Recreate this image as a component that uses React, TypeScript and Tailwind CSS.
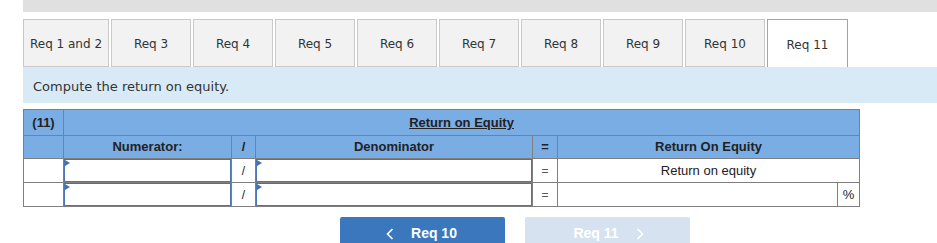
import React from "react";

const tabs = ["Req 1 and 2", "Req 3", "Req 4", "Req 5", "Req 6", "Req 7", "Req 8", "Req 9", "Req 10", "Req 11"];

function EntryBox() {
  return (
    <div className="relative h-[23px] border border-[#4a78b5] border-t-[#5b6f8c] bg-white">
      <span className="absolute left-0 top-0 h-0 w-0 border-y-[3px] border-l-[5px] border-y-transparent border-l-[#3c74b8]" />
    </div>
  );
}

function Chevron({ dir }: { dir: "left" | "right" }) {
  return (
    <svg width="8" height="12" viewBox="0 0 8 12" fill="none" stroke="white" strokeWidth="1.6">
      {dir === "left" ? <polyline points="6.5,1 1.5,6 6.5,11" /> : <polyline points="1.5,1 6.5,6 1.5,11" />}
    </svg>
  );
}

export default function App() {
  return (
    <div className="h-[243px] w-[937px] overflow-hidden bg-white pl-[23px] font-['DejaVu_Sans',Verdana,sans-serif] text-[#222]">
      {/* top strip */}
      <div className="h-[12px] bg-[#e0e0e0]" />

      {/* tabs */}
      <div className="mt-[7px] flex h-[48px] gap-[2px]">
        {tabs.map((t, i) => {
          const active = t === "Req 11";
          return (
            <div
              key={t}
              className={
                active
                  ? "flex h-[48px] w-[81px] items-center justify-center border border-b-0 border-[#a3a3a3] bg-white pt-[2px] text-[12px] text-[#333]"
                  : i === 0
                  ? "flex h-[48px] w-[86px] items-center justify-center border border-[#c9c9c9] bg-[#f2f2f2] pt-[2px] text-[12px] text-[#333]"
                  : "flex h-[48px] w-[80px] items-center justify-center border border-[#c9c9c9] bg-[#f2f2f2] pt-[2px] text-[12px] text-[#333]"
              }
            >
              {t}
            </div>
          );
        })}
      </div>

      {/* instructions */}
      <div className="flex h-[36px] items-center bg-[#d9eaf7] pl-[10px] pt-[3px] text-[13px] text-[#333]">
        Compute the return on equity.
      </div>

      {/* ratio table */}
      <table className="mt-[6px] w-[836px] table-fixed border-collapse font-['Liberation_Sans',Arial,sans-serif] text-[13px] text-[#222]">
        <colgroup>
          <col className="w-[40px]" />
          <col className="w-[168px]" />
          <col className="w-[24px]" />
          <col className="w-[277px]" />
          <col className="w-[25px]" />
          <col className="w-[280px]" />
          <col className="w-[22px]" />
        </colgroup>
        <tbody>
          <tr className="h-[26px] bg-[#7aade4]">
            <td className="border border-[#7f7f7f] pt-[3px] text-center align-top font-bold">(11)</td>
            <td colSpan={6} className="border border-[#7f7f7f] pt-[3px] text-center align-top font-bold underline">
              Return on Equity
            </td>
          </tr>
          <tr className="h-[23px] bg-[#7aade4] font-bold">
            <td className="border border-[#7f7f7f]" />
            <td className="border border-[#7f7f7f] text-center">Numerator:</td>
            <td className="border border-[#7f7f7f] text-center">/</td>
            <td className="border border-[#7f7f7f] text-center">Denominator</td>
            <td className="border border-[#7f7f7f] text-center">=</td>
            <td colSpan={2} className="border border-[#7f7f7f] text-center">Return On Equity</td>
          </tr>
          <tr className="h-[24px] bg-white">
            <td className="border border-[#7f7f7f]" />
            <td className="border border-[#7f7f7f] p-0"><EntryBox /></td>
            <td className="border border-[#7f7f7f] text-center text-[12px]">/</td>
            <td className="border border-[#7f7f7f] p-0"><EntryBox /></td>
            <td className="border border-[#7f7f7f] text-center text-[12px] text-[#555]">=</td>
            <td colSpan={2} className="border border-[#7f7f7f] text-center">Return on equity</td>
          </tr>
          <tr className="h-[23px] bg-white">
            <td className="border border-[#7f7f7f]" />
            <td className="border border-[#7f7f7f] p-0"><EntryBox /></td>
            <td className="border border-[#7f7f7f] text-center text-[12px]">/</td>
            <td className="border border-[#7f7f7f] p-0"><EntryBox /></td>
            <td className="border border-[#7f7f7f] text-center text-[12px] text-[#555]">=</td>
            <td className="border border-[#7f7f7f]" />
            <td className="border border-[#7f7f7f] text-center">%</td>
          </tr>
        </tbody>
      </table>

      {/* nav buttons */}
      <div className="mt-[10px] flex gap-[20px] pl-[317px] font-['Liberation_Sans',Arial,sans-serif] text-[14px] font-bold text-white">
        <div className="flex h-[33px] w-[165px] items-center justify-center gap-[17px] rounded-t-[2px] bg-[#3a77bd] pr-[2px]">
          <Chevron dir="left" />
          <span>Req 10</span>
        </div>
        <div className="flex h-[33px] w-[165px] items-center justify-center gap-[17px] rounded-t-[2px] bg-[#d6e2f0] pl-[2px]">
          <span>Req 11</span>
          <Chevron dir="right" />
        </div>
      </div>
    </div>
  );
}
